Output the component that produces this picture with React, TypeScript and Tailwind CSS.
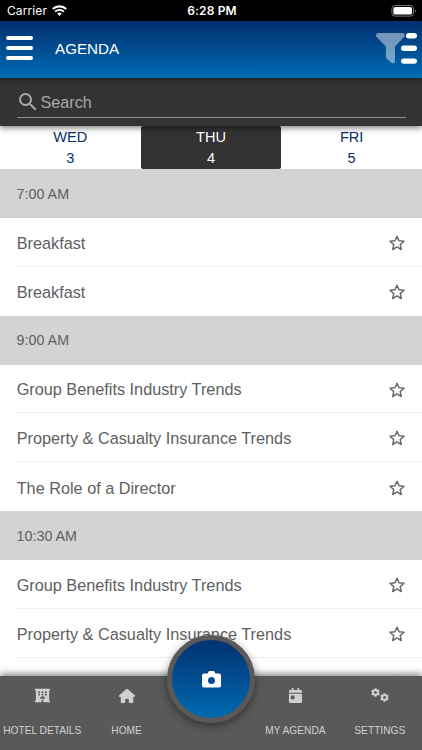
import { FaHotel, FaCalendarDay, FaCog } from "react-icons/fa";
import { FaHouse } from "react-icons/fa6";
import { MdSearch } from "react-icons/md";
import clsx from "clsx";
import type { ReactNode } from "react";

const days = [
  { name: "WED", date: 3 },
  { name: "THU", date: 4 },
  { name: "FRI", date: 5 },
];

const agenda = [
  { time: "7:00 AM", sessions: ["Breakfast", "Breakfast"] },
  {
    time: "9:00 AM",
    sessions: [
      "Group Benefits Industry Trends",
      "Property & Casualty Insurance Trends",
      "The Role of a Director",
    ],
  },
  {
    time: "10:30 AM",
    sessions: [
      "Group Benefits Industry Trends",
      "Property & Casualty Insurance Trends",
      "The Role of a Director",
    ],
  },
];

const StatusBar = () => (
  <div className="grid h-[21px] shrink-0 grid-cols-3 items-center bg-black pt-px pr-[5px] pl-[7px] font-['Inter',sans-serif] text-white">
    <div className="flex items-center gap-[5px] text-[12px] tracking-[0.1px]">
      <span>Carrier</span>
      <svg width="15" height="11" viewBox="0 0 15 11" fill="none" className="mb-px">
        <path d="M.8 4.1a9.6 9.6 0 0 1 13.4 0" stroke="white" strokeWidth="2.1" />
        <path d="M3.1 6.7a6.2 6.2 0 0 1 8.8 0" stroke="white" strokeWidth="1.9" />
        <path d="M7.5 11 5.2 8.6a3.3 3.3 0 0 1 4.6 0z" fill="white" />
      </svg>
    </div>
    <div className="text-center text-[12px] font-semibold tracking-[0.15px]">6:28 PM</div>
    <div className="flex justify-end">
      <svg width="26" height="12" viewBox="0 0 26 12" fill="none">
        <rect x=".9" y=".5" width="21.6" height="10.6" rx="3" stroke="#777" />
        <rect x="2.4" y="2" width="18.6" height="7.6" rx="1.7" fill="white" />
        <path d="M24 4.2c1.1.5 1.1 2.7 0 3.2z" fill="#888" />
      </svg>
    </div>
  </div>
);

const Header = () => (
  <div className="z-20 flex h-[57px] shrink-0 items-center bg-linear-to-b from-[#032f6e] to-[#006db5] pr-[5px] pl-[6px] text-white shadow-[0_2px_5px_rgba(0,0,0,0.4)]">
    <button className="flex w-[27px] flex-col gap-[6px] pb-[3px]">
      <span className="h-[4px] rounded-full bg-white" />
      <span className="h-[4px] rounded-full bg-white" />
      <span className="h-[4px] rounded-full bg-white" />
    </button>
    <h1 className="ml-[22px] grow text-[15.2px]">AGENDA</h1>
    <button>
      <svg width="41" height="32" viewBox="0 0 41 32" fill="white" className="mb-[3px]">
        <path
          d="M2.3 1h24.2c2.2 0 3 2.5 1.6 4L19 14.6v14.8c0 1.7-1.9 2.4-3.1 1.5l-5.1-4c-.6-.5-.9-1-.9-1.8V14.6L.7 5C-.7 3.5.1 1 2.3 1z"
          opacity=".45"
        />
        <rect x="30" y="1" width="11" height="5.4" rx="2.7" />
        <rect x="25" y="13.6" width="16" height="5.4" rx="2.7" />
        <rect x="25" y="26.4" width="16" height="5.4" rx="2.7" />
      </svg>
    </button>
  </div>
);

const SearchBar = () => (
  <div className="z-10 h-[48px] shrink-0 bg-[#333] px-[16.5px] pt-[9px] shadow-[0_2px_6px_rgba(0,0,0,0.5)]">
    <label className="flex h-[31px] items-center border-b border-[#8f8f8f] text-[#a9a9a9]">
      <MdSearch size={24} className="mr-[1px] -ml-px mb-px" />
      <input
        placeholder="Search"
        className="grow bg-transparent text-[16.2px] outline-none placeholder:text-[#a9a9a9]"
      />
    </label>
  </div>
);

const DayTabs = () => (
  <div className="grid h-[43px] shrink-0 grid-cols-3 bg-white">
    {days.map((day) => (
      <button
        key={day.name}
        className={clsx(
          "flex flex-col items-center pt-px text-[14.6px] leading-[20.5px]",
          day.name === "THU" ? "rounded-[2px] bg-[#333] text-white" : "text-[#0b2f6b]"
        )}
      >
        <span>{day.name}</span>
        <span>{day.date}</span>
      </button>
    ))}
  </div>
);

const SessionRow = ({ title, last }: { title: string; last: boolean }) => (
  <div className="h-[48.9px] bg-white pl-[16px]">
    <div
      className={clsx(
        "flex h-full items-center justify-between pt-[2px] pr-[17px]",
        !last && "border-b border-[#f0f0f0]"
      )}
    >
      <span className="pl-[0.7px] text-[16.25px] whitespace-nowrap text-[#606060]">{title}</span>
      <svg width="16" height="16" viewBox="0 0 16 16" fill="none" stroke="#6a6a6a" strokeWidth="1.5" strokeLinejoin="round">
        <path d="m8 1.2 2 4.6 5 .5-3.8 3.3 1.1 4.9L8 11.9l-4.3 2.6 1.1-4.9L1 6.3l5-.5z" />
      </svg>
    </div>
  </div>
);

const NavItem = ({ icon, label }: { icon: ReactNode; label: string }) => (
  <button className="flex flex-col items-center pt-[11px] text-[#d0d0d0]">
    <span className="flex h-[17px] items-center">{icon}</span>
    <span className="mt-[18px] text-[10.2px] leading-[17px] whitespace-nowrap">{label}</span>
  </button>
);

const BottomNav = () => (
  <div className="absolute inset-x-0 bottom-0 z-20 grid h-[74px] grid-cols-5 bg-[#595959] shadow-[0_-2px_7px_rgba(0,0,0,0.5)]">
    <NavItem icon={<FaHotel size={15} />} label="HOTEL DETAILS" />
    <NavItem icon={<FaHouse size={16} />} label="HOME" />
    <button className="-mt-[41px] flex size-[88px] items-center justify-center justify-self-center rounded-full border-[5px] border-[#595959] bg-linear-to-b from-[#032f6e] to-[#006db5] bg-origin-border text-white shadow-[0_3px_8px_rgba(0,0,0,0.45)]">
      <svg width="19" height="17" viewBox="0 0 19 17" fill="currentColor">
        <path
          fillRule="evenodd"
          d="M2 2.6h3.6L6.3 1c.2-.6.7-1 1.3-1h3.8c.6 0 1.1.4 1.3 1l.7 1.6H17a2 2 0 0 1 2 2V14.6a2 2 0 0 1-2 2H2a2 2 0 0 1-2-2V4.600a2 2 0 0 1 2-2zM9.500 6.100a3.500 3.500 0 1 0 0 7 3.500 3.500 0 0 0 0-7z"
        />
      </svg>
    </button>
    <NavItem icon={<FaCalendarDay size={15} />} label="MY AGENDA" />
    <NavItem
      icon={
        <span className="flex gap-px">
          <FaCog size={9} className="-mt-[2px]" />
          <FaCog size={9} className="mt-[3px] -ml-px" />
        </span>
      }
      label="SETTINGS"
    />
  </div>
);

export default function App() {
  return (
    <div className="relative flex h-[750px] w-[422px] flex-col overflow-hidden bg-white font-['Liberation_Sans',Arial,sans-serif]">
      <StatusBar />
      <Header />
      <SearchBar />
      <DayTabs />
      <div className="min-h-0 grow overflow-hidden">
        {agenda.map((slot) => (
          <section key={slot.time}>
            <h2 className="flex h-[48.9px] items-center bg-[#d3d3d3] pt-[2px] pl-[16.6px] text-[14.3px] text-[#606060]">
              {slot.time}
            </h2>
            {slot.sessions.map((title, i) => (
              <SessionRow key={i} title={title} last={i === slot.sessions.length - 1} />
            ))}
          </section>
        ))}
      </div>
      <BottomNav />
    </div>
  );
}
